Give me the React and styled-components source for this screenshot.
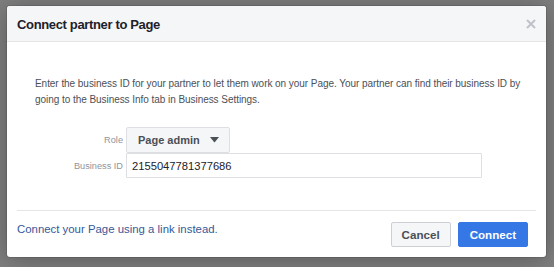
import styled, { createGlobalStyle } from 'styled-components';

const GlobalStyle = createGlobalStyle`
  html, body {
    margin: 0;
    padding: 0;
    background: #7f7f7f;
  }
  body {
    font-family: "Liberation Sans", Arial, sans-serif;
    -webkit-font-smoothing: antialiased;
  }
`;

const Backdrop = styled.div`
  width: 554px;
  height: 267px;
  box-sizing: border-box;
  padding: 6px 8px 10px 7px;
`;

const Dialog = styled.div`
  height: 251px;
  background: #fff;
  border-radius: 3px;
  box-shadow: 0 2px 26px rgba(0, 0, 0, 0.3), 0 0 0 1px rgba(0, 0, 0, 0.1);
  display: flex;
  flex-direction: column;
  overflow: hidden;
`;

const Header = styled.div`
  height: 35px;
  background: #f5f6f7;
  border-bottom: 1px solid #e5e5e5;
  display: flex;
  align-items: center;
  justify-content: space-between;
  padding: 0 10px 0 10px;
`;

const Title = styled.h2`
  margin: 0;
  font-size: 13px;
  letter-spacing: -0.35px;
  font-weight: bold;
  color: #1d2129;
  padding-top: 1px;
`;

const Close = styled.button`
  border: 0;
  background: none;
  padding: 0;
  width: 10px;
  height: 10px;
  display: flex;
  cursor: pointer;
`;

const Body = styled.div`
  padding: 34px 8px 0 28px;
  flex: 1;
`;

const Intro = styled.p`
  margin: 0;
  max-width: 502px;
  font-size: 10px;
  letter-spacing: -0.05px;
  line-height: 16px;
  color: #4b4f56;
`;

const Form = styled.div`
  margin-top: 19px;
  display: grid;
  grid-template-columns: 88px 356px;
  column-gap: 3px;
  align-items: center;
`;

const Label = styled.label`
  text-align: right;
  font-size: 9.2px;
  color: #90949c;
`;

const RoleButton = styled.button`
  justify-self: start;
  height: 26px;
  width: 104px;
  box-sizing: border-box;
  border: 1px solid #dddfe2;
  border-radius: 2px;
  background: #f5f6f7;
  font-family: inherit;
  font-size: 11px;
  font-weight: bold;
  color: #4b4f56;
  display: flex;
  align-items: center;
  gap: 10px;
  padding: 0 0 0 11px;
`;

const Input = styled.input`
  height: 25px;
  box-sizing: border-box;
  border: 1px solid #dddfe2;
  border-radius: 1px;
  font-family: inherit;
  font-size: 11.2px;
  color: #1d2129;
  padding: 0 0 0 5px;
  outline: 0;
`;

const Footer = styled.div`
  margin: 0 10px;
  border-top: 1px solid #e5e5e5;
  height: 46px;
  display: flex;
  align-items: flex-start;
  justify-content: space-between;
`;

const LinkText = styled.a`
  margin-top: 10px;
  font-size: 11.4px;
  line-height: 16px;
  color: #365899;
  text-decoration: none;
  cursor: pointer;
`;

const Actions = styled.div`
  display: flex;
  gap: 7px;
  margin: 11px 8px 0 0;
`;

const Button = styled.button`
  height: 25px;
  box-sizing: border-box;
  border-radius: 2px;
  font-family: inherit;
  font-size: 11.6px;
  font-weight: bold;
  padding: 0 ${(p) => (p.$primary ? '11px' : '10px')};
  border: 1px solid ${(p) => (p.$primary ? '#3578e5' : '#ccd0d5')};
  background: ${(p) => (p.$primary ? '#3578e5' : '#f5f6f7')};
  color: ${(p) => (p.$primary ? '#fff' : '#4b4f56')};
  cursor: pointer;
`;

const App = () => {
  return (
    <>
      <GlobalStyle />
      <Backdrop>
        <Dialog>
          <Header>
            <Title>Connect partner to Page</Title>
            <Close aria-label="Close">
              <svg width="10" height="10" viewBox="0 0 10 10">
                <path d="M1 1 L9 9 M9 1 L1 9" stroke="#bec2c9" strokeWidth="2" />
              </svg>
            </Close>
          </Header>
          <Body>
            <Intro>
              Enter the business ID for your partner to let them work on your Page. Your partner can find their business ID by going to the Business Info tab in Business Settings.
            </Intro>
            <Form>
              <Label>Role</Label>
              <RoleButton>
                Page admin
                <svg width="9" height="6" viewBox="0 0 9 6">
                  <path d="M0 0 H9 L4.5 5.5 Z" fill="#4b4f56" />
                </svg>
              </RoleButton>
              <Label>Business ID</Label>
              <Input defaultValue="2155047781377686" />
            </Form>
          </Body>
          <Footer>
            <LinkText>Connect your Page using a link instead.</LinkText>
            <Actions>
              <Button>Cancel</Button>
              <Button $primary>Connect</Button>
            </Actions>
          </Footer>
        </Dialog>
      </Backdrop>
    </>
  );
};

export default App;
